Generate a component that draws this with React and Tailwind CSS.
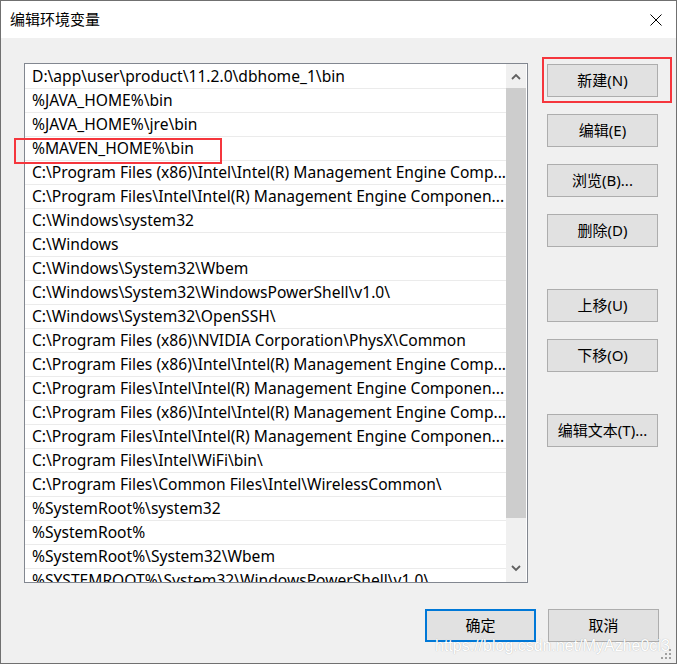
import React from "react"

const paths = [
  "D:\\app\\user\\product\\11.2.0\\dbhome_1\\bin",
  "%JAVA_HOME%\\bin",
  "%JAVA_HOME%\\jre\\bin",
  "%MAVEN_HOME%\\bin",
  "C:\\Program Files (x86)\\Intel\\Intel(R) Management Engine Comp...",
  "C:\\Program Files\\Intel\\Intel(R) Management Engine Componen...",
  "C:\\Windows\\system32",
  "C:\\Windows",
  "C:\\Windows\\System32\\Wbem",
  "C:\\Windows\\System32\\WindowsPowerShell\\v1.0\\",
  "C:\\Windows\\System32\\OpenSSH\\",
  "C:\\Program Files (x86)\\NVIDIA Corporation\\PhysX\\Common",
  "C:\\Program Files (x86)\\Intel\\Intel(R) Management Engine Comp...",
  "C:\\Program Files\\Intel\\Intel(R) Management Engine Componen...",
  "C:\\Program Files (x86)\\Intel\\Intel(R) Management Engine Comp...",
  "C:\\Program Files\\Intel\\Intel(R) Management Engine Componen...",
  "C:\\Program Files\\Intel\\WiFi\\bin\\",
  "C:\\Program Files\\Common Files\\Intel\\WirelessCommon\\",
  "%SystemRoot%\\system32",
  "%SystemRoot%",
  "%SystemRoot%\\System32\\Wbem",
  "%SYSTEMROOT%\\System32\\WindowsPowerShell\\v1.0\\",
]

function Chevron({ down }) {
  return (
    <svg width="10" height="7" viewBox="0 0 10 7" className={down ? "rotate-180" : ""}>
      <path d="M1 6 L5 2 L9 6" fill="none" stroke="#606060" strokeWidth="1.8" />
    </svg>
  )
}

function Button({ children, primary, className = "" }) {
  return (
    <div
      className={`relative w-[111px] h-[33px] flex items-center justify-center bg-[#e1e1e1] text-[15px] text-black ${
        primary ? "border-2 border-[#0078d7]" : "border border-[#adadad]"
      } ${className}`}
    >
      {children}
    </div>
  )
}

export default function App() {
  return (
    <div
      className="relative w-[677px] h-[664px] border border-[#707070] flex flex-col bg-[#f0f0f0] overflow-hidden"
      style={{ fontFamily: '"Noto Sans", "Noto Sans CJK SC", sans-serif' }}
    >
      {/* title bar */}
      <div className="h-[37px] bg-white flex items-center justify-between pl-[9px] pr-[14px]">
        <span className="text-[15px] text-black">编辑环境变量</span>
        <svg width="12" height="12" viewBox="0 0 12 12">
          <path d="M0.5 0.5 L11.5 11.5 M11.5 0.5 L0.5 11.5" stroke="#000" strokeWidth="1" />
        </svg>
      </div>

      <div className="flex mt-[25px]">
        {/* path list */}
        <div className="ml-[23px] w-[504px] h-[520px] border border-[#828790] bg-white flex overflow-hidden">
          <div className="flex-1 pt-px overflow-hidden">
            {paths.map((p, i) => (
              <div
                key={i}
                className="h-[24px] border-b border-[#ebebeb] pl-[7px] pt-px flex items-center text-[15.6px] text-black whitespace-nowrap overflow-hidden"
              >
                {p}
              </div>
            ))}
          </div>
          <div className="w-[20px] mr-px bg-[#f0f0f0] flex flex-col">
            <div className="h-[24px] flex items-center justify-center">
              <Chevron />
            </div>
            <div className="h-[430px] bg-[#cdcdcd]" />
            <div className="flex-1" />
            <div className="h-[24px] flex items-center justify-center pb-[3px]">
              <Chevron down />
            </div>
          </div>
        </div>

        {/* action buttons */}
        <div className="ml-[19px] mt-px flex flex-col">
          <Button>
            新建(N)
            <div className="absolute -left-[6px] -top-[8px] -right-[15px] -bottom-[7px] border-2 border-[#f5363d]" />
          </Button>
          <Button className="mt-[17px]">编辑(E)</Button>
          <Button className="mt-[17px]">浏览(B)...</Button>
          <Button className="mt-[17px]">删除(D)</Button>
          <Button className="mt-[42px]">上移(U)</Button>
          <Button className="mt-[17px]">下移(O)</Button>
          <Button className="mt-[42px]">编辑文本(T)...</Button>
        </div>
      </div>

      <div className="flex justify-end gap-[12px] pr-[17px] mt-[26px]">
        <Button primary>确定</Button>
        <Button>取消</Button>
      </div>

      {/* highlighted entry */}
      <div className="absolute left-[13px] top-[137px] w-[208px] h-[26px] border-2 border-[#f5363d]" />

      <span
        className="absolute left-[434px] top-[636px] text-[16px] leading-[18px] text-white [text-shadow:0_0_1px_rgba(0,0,0,0.3)]"
        style={{ fontFamily: '"Liberation Sans", Arial, sans-serif' }}
      >
        https://blog.csdn.net/MyAzhe0ci3
      </span>

      {/* size grip */}
      <svg className="absolute right-[3px] bottom-[2px]" width="12" height="12" viewBox="0 0 12 12">
        <g fill="#a0a0a0">
          <rect x="8" y="0" width="2" height="2" />
          <rect x="4" y="4" width="2" height="2" />
          <rect x="8" y="4" width="2" height="2" />
          <rect x="0" y="8" width="2" height="2" />
          <rect x="4" y="8" width="2" height="2" />
          <rect x="8" y="8" width="2" height="2" />
        </g>
      </svg>
    </div>
  )
}
